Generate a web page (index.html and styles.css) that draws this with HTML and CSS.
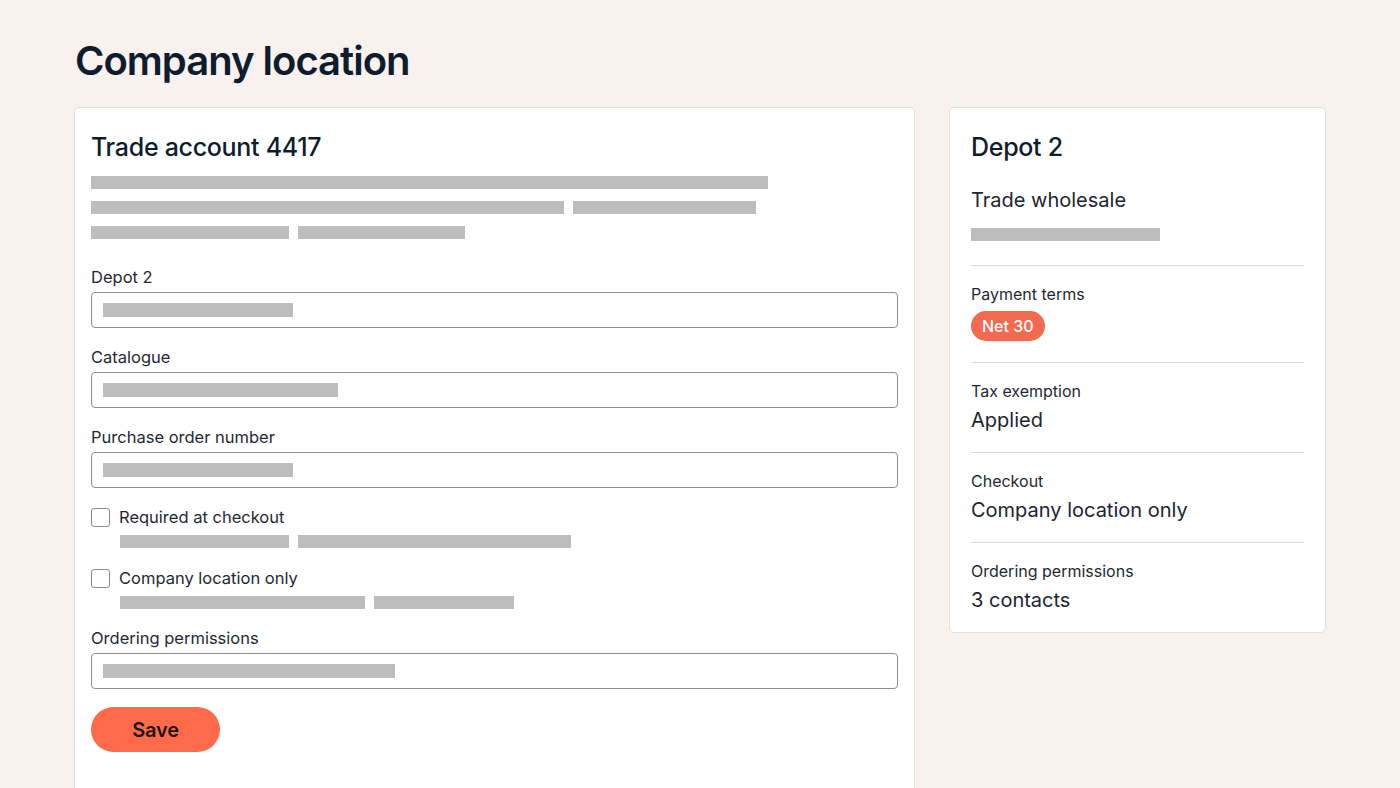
FILE: index.html
```html
<!DOCTYPE html>
<html lang="en">
<head>
<meta charset="utf-8">
<title>Company location</title>
<link rel="stylesheet" href="styles.css">
</head>
<body>
<main class="page">
  <h1 class="page-title">Company location</h1>
  <div class="layout">
    <section class="card form-card">
      <h2 class="card-title">Trade account 4417</h2>
      <div class="skeleton-block">
        <div class="sk-row"><span class="sk" style="width:677px"></span></div>
        <div class="sk-row"><span class="sk" style="width:473px"></span><span class="sk" style="width:183px"></span></div>
        <div class="sk-row"><span class="sk" style="width:198px"></span><span class="sk" style="width:167px"></span></div>
      </div>

      <div class="field">
        <label class="field-label">Depot 2</label>
        <div class="input"><span class="sk sk-in" style="width:190px"></span></div>
      </div>
      <div class="field">
        <label class="field-label">Catalogue</label>
        <div class="input"><span class="sk sk-in" style="width:235px"></span></div>
      </div>
      <div class="field">
        <label class="field-label">Purchase order number</label>
        <div class="input"><span class="sk sk-in" style="width:190px"></span></div>
      </div>

      <div class="check">
        <div class="check-line"><span class="box"></span><span class="check-label">Required at checkout</span></div>
        <div class="sk-row check-sk"><span class="sk" style="width:169px"></span><span class="sk" style="width:273px"></span></div>
      </div>
      <div class="check">
        <div class="check-line"><span class="box"></span><span class="check-label">Company location only</span></div>
        <div class="sk-row check-sk"><span class="sk" style="width:245px"></span><span class="sk" style="width:140px"></span></div>
      </div>

      <div class="field">
        <label class="field-label">Ordering permissions</label>
        <div class="input"><span class="sk sk-in" style="width:292px"></span></div>
      </div>

      <button class="save-btn" type="button">Save</button>
    </section>

    <aside class="card summary-card">
      <h2 class="card-title">Depot 2</h2>
      <div class="summary-head">
        <div class="summary-name">Trade wholesale</div>
        <span class="sk" style="width:189px"></span>
      </div>
      <div class="summary-section payment">
        <div class="s-label">Payment terms</div>
        <span class="badge">Net 30</span>
      </div>
      <div class="summary-section">
        <div class="s-label">Tax exemption</div>
        <div class="s-value">Applied</div>
      </div>
      <div class="summary-section">
        <div class="s-label">Checkout</div>
        <div class="s-value">Company location only</div>
      </div>
      <div class="summary-section last">
        <div class="s-label">Ordering permissions</div>
        <div class="s-value">3 contacts</div>
      </div>
    </aside>
  </div>
</main>
</body>
</html>
```

FILE: styles.css
```css
* { box-sizing: border-box; }

html, body {
  margin: 0;
  padding: 0;
  background: #f8f1ed;
  font-family: Inter, "Liberation Sans", Arial, sans-serif;
  color: #1c2530;
  overflow: hidden;
}

.page {
  padding: 37px 0 0 74px;
}

.page-title {
  margin: 0 0 22px 1px;
  font-size: 40px;
  line-height: 48px;
  font-weight: 600;
  letter-spacing: -1px;
  color: #0d1c2e;
}

.layout {
  display: grid;
  grid-template-columns: 841px 377px;
  column-gap: 34px;
  align-items: start;
}

.card {
  background: #ffffff;
  border: 1px solid #e4dfdb;
  border-radius: 5px;
}

.form-card {
  padding: 23px 16px 60px 16px;
}

.card-title {
  margin: 0;
  font-size: 25px;
  line-height: 32px;
  font-weight: 500;
  letter-spacing: -0.3px;
  color: #0d1c2e;
}

.skeleton-block {
  margin-top: 13px;
  display: flex;
  flex-direction: column;
  gap: 12px;
}

.sk-row {
  display: flex;
  gap: 9px;
}

.sk {
  display: block;
  height: 13px;
  background: #bdbdbd;
}

.field {
  margin-top: 27px;
}
.field + .field, .check + .field { margin-top: 18px; }

.field-label {
  display: block;
  font-size: 16.5px;
  line-height: 22px;
  color: #1f2933;
  margin-bottom: 4px;
}

.input {
  height: 36px;
  border: 1px solid #8f8f8f;
  border-radius: 4px;
  display: flex;
  align-items: center;
  padding-left: 11px;
}

.sk-in { height: 14px; }

.check { margin-top: 18px; }
.check + .check { margin-top: 19px; }

.check-line {
  display: flex;
  align-items: center;
  height: 22px;
}

.box {
  width: 19px;
  height: 19px;
  border: 1px solid #8a8a8a;
  border-radius: 3px;
  margin-right: 9px;
  background: #fff;
}

.check-label {
  font-size: 16.5px;
  line-height: 22px;
  color: #1f2933;
}

.check-sk {
  margin-top: 7px;
  padding-left: 29px;
}

.save-btn {
  margin-top: 18px;
  display: block;
  width: 129px;
  height: 45px;
  border: none;
  border-radius: 23px;
  background: #ff6b4a;
  color: #1a1414;
  font-family: Inter, "Liberation Sans", Arial, sans-serif;
  font-size: 20px;
  font-weight: 600;
  letter-spacing: -0.2px;
  padding: 0;
}

.summary-card {
  padding: 23px 21px 18px 21px;
}

.summary-head {
  padding: 23px 0 24px;
  border-bottom: 1px solid #dedbd8;
}

.summary-name {
  font-size: 20px;
  line-height: 28px;
  color: #1c2530;
  margin-bottom: 14px;
}

.summary-section {
  padding: 17px 0 18px;
  border-bottom: 1px solid #dedbd8;
}
.summary-section.payment { padding-bottom: 21px; }
.summary-section.last {
  border-bottom: none;
  padding-bottom: 0;
}

.s-label {
  font-size: 16px;
  line-height: 22px;
  color: #1f2933;
}

.s-value {
  margin-top: 4px;
  font-size: 20px;
  line-height: 28px;
  color: #1c2530;
}

.badge {
  display: inline-flex;
  align-items: center;
  margin-top: 6px;
  height: 30px;
  padding: 0 11px;
  border-radius: 15px;
  background: #f26a4f;
  color: #ffffff;
  font-size: 16px;
  font-weight: 500;
}
```
